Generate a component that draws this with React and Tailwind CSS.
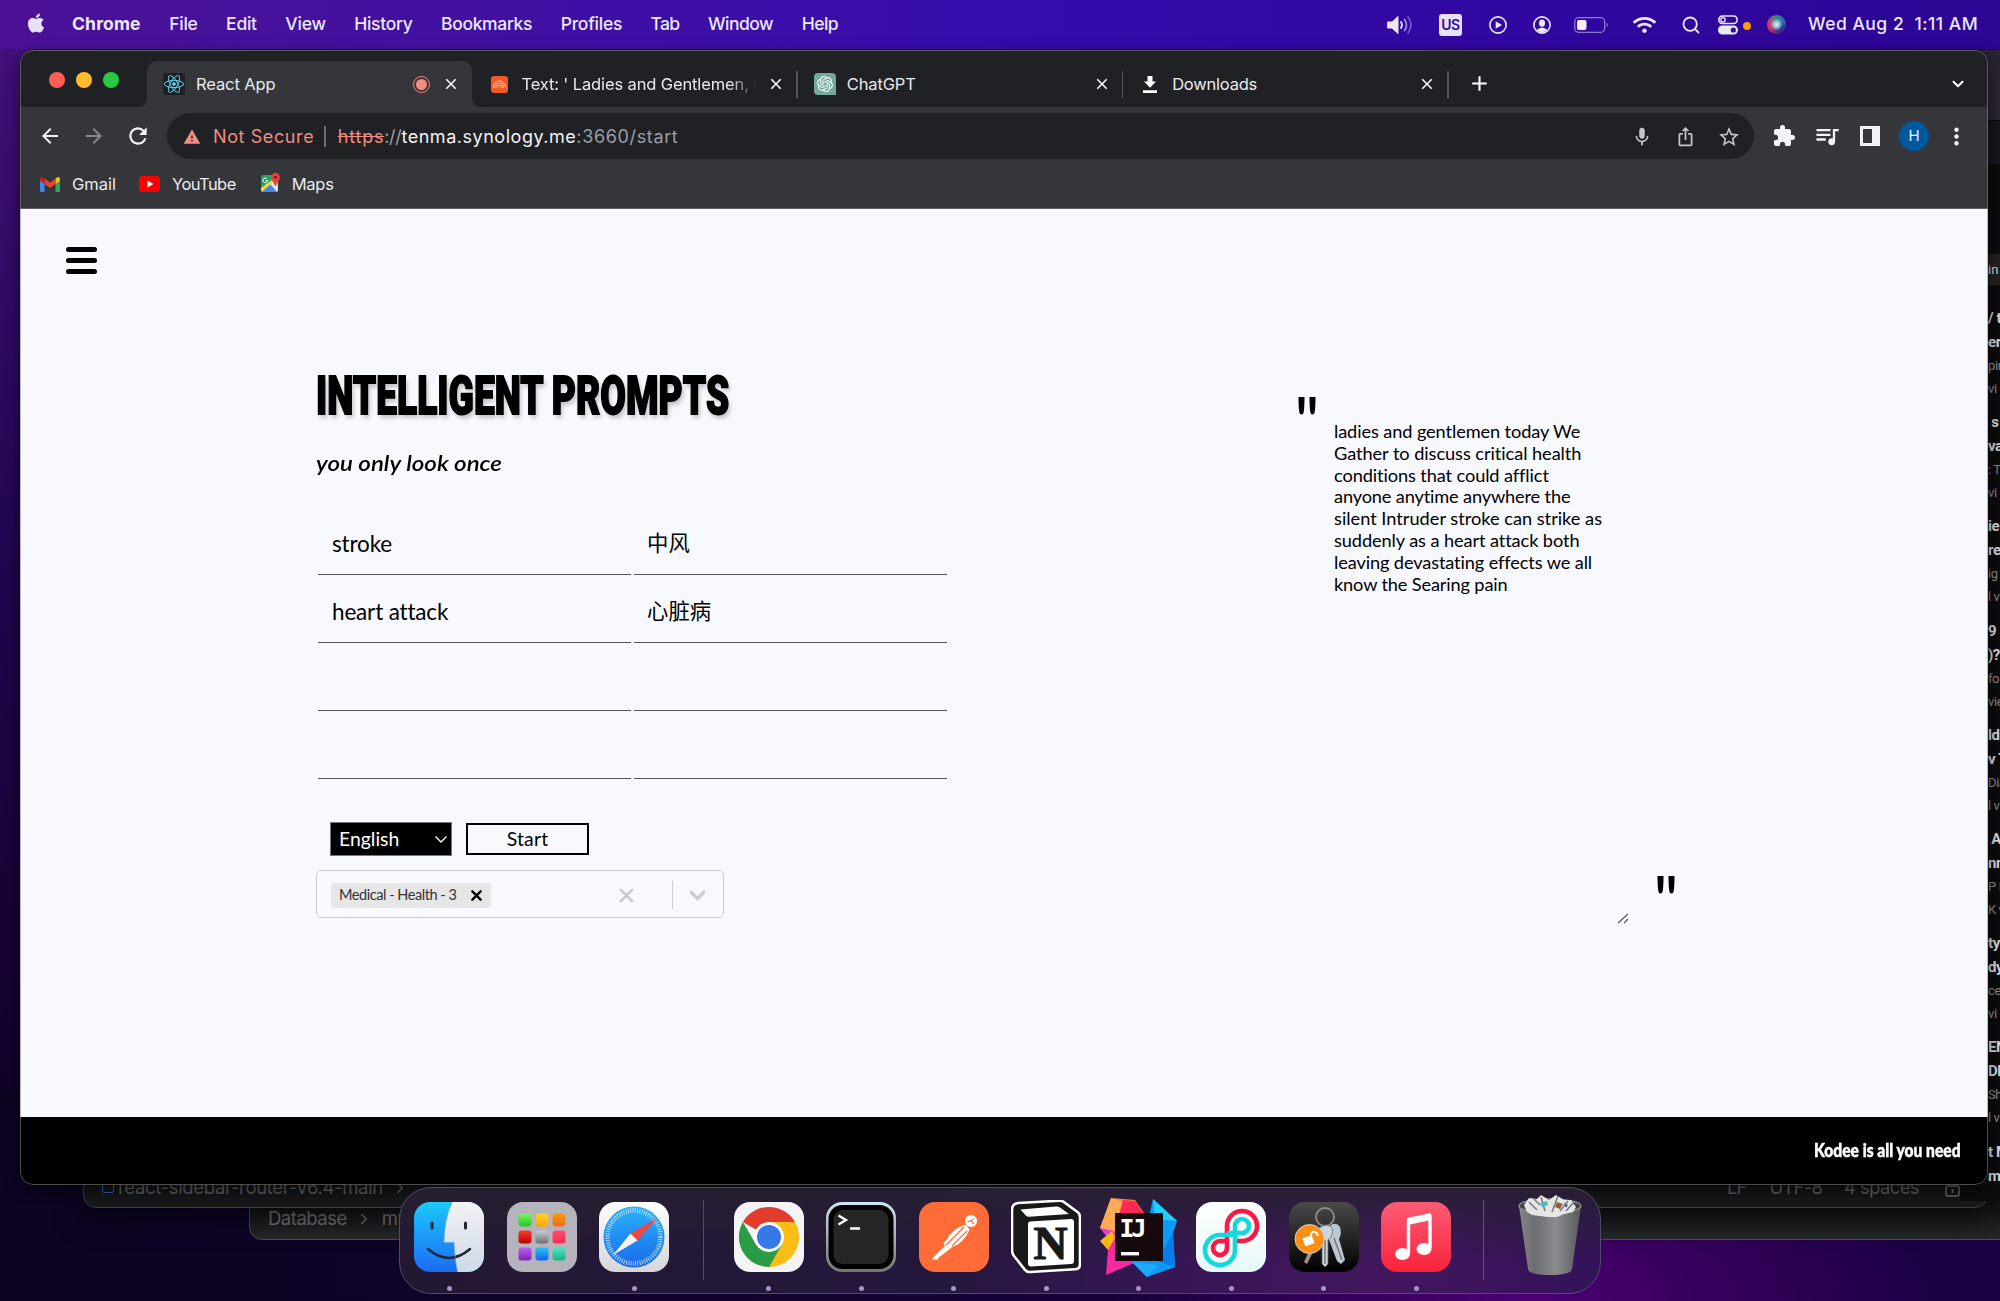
import React, { useLayoutEffect, useRef, useState } from "react";
import { FaApple, FaReact, FaWifi } from "react-icons/fa";
import { SiOpenai } from "react-icons/si";
import {
  MdArrowBack, MdArrowForward, MdRefresh, MdMic, MdIosShare, MdStarBorder, MdExtension,
  MdQueueMusic, MdMoreVert, MdWarning, MdClose, MdAdd,
} from "react-icons/md";
import { ChevronDown, ChevronRight, Search } from "lucide-react";

/* Text set to a measured width, by tracking or by horizontal stretch. */
function Fit({ w, stretch, className = "", children }) {
  const ref = useRef(null);
  const [style, setStyle] = useState({});
  useLayoutEffect(() => {
    const natural = ref.current.offsetWidth;
    const n = ref.current.textContent.length;
    setStyle(
      stretch
        ? { transform: `scaleX(${w / natural})`, marginRight: w - natural }
        : { letterSpacing: `${(w - natural) / n}px` }
    );
  }, []);
  return (
    <span ref={ref} style={style} className={`inline-block shrink-0 origin-left whitespace-pre ${className}`}>
      {children}
    </span>
  );
}

const MENUS = [["File", 28], ["Edit", 31], ["View", 40], ["History", 58], ["Bookmarks", 91], ["Profiles", 61], ["Tab", 29], ["Window", 65], ["Help", 37]];

function MenuBar() {
  return (
    <header className="absolute inset-x-0 top-0 flex h-[49px] items-center bg-linear-to-r from-[#4b1197] via-[#350bad] to-[#2c0594] pl-[27px] text-[17.5px] text-[#ece8f8]">
      <FaApple className="-mt-1 h-[22px] w-[18px] text-[#e6e2f4]" />
      <nav className="ml-[27px] flex gap-[28.5px]">
        <Fit w={69} className="font-bold">Chrome</Fit>
        {MENUS.map(([t, w]) => <Fit key={t} w={w} className="font-medium">{t}</Fit>)}
      </nav>
      <div className="ml-auto flex w-[613px] items-center">
        <svg width="26" height="22" viewBox="0 0 26 22" fill="none" strokeWidth="1.7" strokeLinecap="round">
          <path d="M1 8h4l6-5.5v17L5 14H1z" fill="#ece8f8" stroke="#ece8f8" strokeWidth="1" strokeLinejoin="round" />
          <path d="M14 8q2 3 0 6" stroke="#ece8f8" />
          <path d="M17.5 5.5q4 5.500 0 11" stroke="#a08fdc" />
          <path d="M21 3q6 8 0 16" stroke="#7158c8" />
        </svg>
        <span className="ml-[26px] flex h-[22px] w-[23px] items-center justify-center rounded-[3px] bg-[#e6e2f4] text-[14px] font-semibold tracking-[-0.5px] text-[#2f0ba2]">US</span>
        <svg className="ml-[27px]" width="18" height="18" viewBox="0 0 18 18">
          <circle cx="9" cy="9" r="8.100" fill="none" stroke="#ece8f8" strokeWidth="1.600" />
          <path d="M6.700 5.200v7.600L13 9z" fill="#ece8f8" />
        </svg>
        <svg className="ml-[25.5px]" width="18" height="18" viewBox="0 0 18 18">
          <circle cx="9" cy="9" r="8.100" fill="none" stroke="#ece8f8" strokeWidth="1.600" />
          <ellipse cx="9" cy="7.200" rx="3" ry="3.600" fill="#ece8f8" />
          <path d="M3.500 14q5.500-5 11 0q-5.500 4.500-11 0z" fill="#ece8f8" />
        </svg>
        <svg className="ml-[23.5px]" width="35" height="16" viewBox="0 0 35 16">
          <rect x=".7" y=".7" width="30" height="14.600" rx="4" fill="none" stroke="#8d79d4" strokeWidth="1.300" />
          <rect x="3" y="3" width="9.500" height="10" rx="2" fill="#f4f1fc" />
          <path d="M32.500 5.500q2.500 2.500 0 5z" fill="#8d79d4" />
        </svg>
        <FaWifi className="ml-[24px] h-[20px] w-[23px]" />
        <Search className="ml-[25px]" size={20} strokeWidth={2.200} />
        <svg className="ml-[17px]" width="20" height="20" viewBox="0 0 20 20">
          <rect x=".8" y="1" width="18.400" height="7.500" rx="3.750" fill="none" stroke="#ece8f8" strokeWidth="1.600" />
          <circle cx="5" cy="4.750" r="2.200" fill="none" stroke="#ece8f8" strokeWidth="1.300" />
          <rect y="10.500" width="20" height="9" rx="4.500" fill="#ece8f8" />
          <circle cx="15.300" cy="15" r="2.600" fill="#2f0ba2" />
        </svg>
        <span className="mt-0.5 ml-[5px] h-2 w-2 rounded-full bg-[#ff9b00]" />
        <span className="ml-[16px] h-[19px] w-[19px] rounded-full bg-[radial-gradient(circle_at_50%_50%,#e8f6ff_0%,#8fb6d8_25%,transparent_45%),conic-gradient(#2b8f86,#2f6fae,#27328f,#5a2d86,#d0355f,#b54a6a,#2b8f86)]" />
        <Fit w={170} className="ml-[22px] font-medium">Wed Aug 2  1:11 AM</Fit>
      </div>
    </header>
  );
}

function Tab({ icon, title, w, active, recording, fade }) {
  return (
    <div className={`relative flex h-[46px] w-[325.4px] items-center ${active ? "rounded-t-[10px] bg-[#35363a]" : ""}`}>
      <span className="ml-4 flex w-[22px] justify-center">{icon}</span>
      <span className={`ml-[11px] w-[236px] overflow-hidden ${fade ? "mask-r-from-88% mask-r-to-100%" : ""}`}>
        <Fit w={w} className="align-middle text-[16.5px] text-[#e9eaed]">{title}</Fit>
      </span>
      {recording && (
        <span className="absolute left-[266px] flex h-[17px] w-[17px] items-center justify-center rounded-full border-[1.5px] border-[#f28b82]">
          <span className="h-[11px] w-[11px] rounded-full bg-[#f28b82]" />
        </span>
      )}
      <MdClose className="ml-[10px]" size={18} />
      {active && (
        <>
          <svg className="absolute bottom-0 -left-[10px]" width="10" height="10"><path d="M10 0v10H0Q10 10 10 0" fill="#35363a" /></svg>
          <svg className="absolute -right-[10px] bottom-0" width="10" height="10"><path d="M0 0v10h10Q0 10 0 0" fill="#35363a" /></svg>
        </>
      )}
      {!active && <span className="absolute right-0 h-[27px] w-[1.5px] bg-[#54575b]" />}
    </div>
  );
}

function TabStrip() {
  return (
    <div className="flex h-[57px] items-end">
      <div className="flex w-[127px] gap-[11px] self-start pt-[22px] pl-[29px]">
        <i className="h-4 w-4 rounded-full bg-[#ff5f57]" />
        <i className="h-4 w-4 rounded-full bg-[#febc2e]" />
        <i className="h-4 w-4 rounded-full bg-[#28c840]" />
      </div>
      <Tab active recording title="React App" w={79} icon={<span className="rounded-[3px] bg-[#1f2023] p-px"><FaReact size={20} color="#61dafb" /></span>} />
      <Tab fade title="Text: ' Ladies and Gentlemen, to" w={247} icon={
        <svg width="17" height="17" viewBox="0 0 17 17" fill="none" stroke="#fbd0b5" strokeWidth="1">
          <rect width="17" height="17" rx="3" fill="#f15a24" stroke="none" />
          <path d="M2.500 12V11a6 6 0 0 1 12 0v1M4.600 12v-1a3.900 3.900 0 0 1 7.800 0v1M6.600 12v-1a1.900 1.900 0 0 1 3.800 0v1" />
        </svg>} />
      <Tab title="ChatGPT" w={69} icon={<span className="rounded-[4px] rounded-br-none bg-[#74aa9c] p-[3px]"><SiOpenai size={16} color="#fff" /></span>} />
      <Tab title="Downloads" w={85} icon={
        <svg width="14" height="17" viewBox="0 0 14 17" fill="#fff"><path d="M4.500 0h5v5.500H13L7 11.800 1 5.500h3.500zM0 14.300h14V17H0z" /></svg>} />
      <MdAdd className="mb-[11px] ml-[18px]" size={25} />
      <ChevronDown className="mr-[21px] mb-[14px] ml-auto" size={18} strokeWidth={2.800} />
    </div>
  );
}

function Toolbar() {
  return (
    <div className="flex h-[52px] items-center bg-[#35363a] pt-[6px] text-[#f1f3f4]">
      <MdArrowBack className="ml-[18px]" size={24} />
      <MdArrowForward className="ml-[20px] text-[#88898c]" size={24} />
      <MdRefresh className="ml-[19px]" size={26} />
      <div className="ml-[16px] flex h-[46px] w-[1587px] items-center rounded-full bg-[#202124] pt-px pl-4 text-[18px] text-[#9aa0a6]">
        <MdWarning size={18} color="#f28b82" />
        <Fit w={101} className="ml-[12px] text-[#f28b82]">Not Secure</Fit>
        <span className="mr-[12px] ml-[10px] h-[21px] w-[1.5px] bg-[#6d6f73]" />
        <Fit w={47} className="text-[#f28b82] line-through">https</Fit>
        <Fit w={17}>://</Fit>
        <Fit w={175} className="text-[#f3f4f6]">tenma.synology.me</Fit>
        <Fit w={102}>:3660/start</Fit>
        <MdMic className="ml-auto text-[#c4c7c9]" size={22} />
        <MdIosShare className="ml-[22px] text-[#c4c7c9]" size={21} />
        <MdStarBorder className="mr-[13px] ml-[21px] text-[#c4c7c9]" size={24} />
      </div>
      <MdExtension className="ml-[18px]" size={24} />
      <MdQueueMusic className="ml-[17px]" size={28} />
      <svg className="ml-[19px]" width="20" height="20"><path fillRule="evenodd" d="M0 0h20v20H0zM3 3v14h9V3z" fill="#f1f3f4" /></svg>
      <span className="ml-[19px] flex h-[30px] w-[30px] items-center justify-center rounded-full bg-[#00599f] text-[15px]">H</span>
      <MdMoreVert className="ml-[14px]" size={27} />
    </div>
  );
}

function Bookmarks() {
  return (
    <div className="flex h-[50px] items-center border-b border-[#5f6063] bg-[#35363a] pt-px pl-5 text-[16.5px] text-[#e9eaed]">
      <svg width="20" height="15" viewBox="0 0 20 15">
        <path d="M0 2v11.500Q0 15 1.500 15h3V6z" fill="#4285f4" />
        <path d="M15.500 6v9h3q1.500 0 1.500-1.500V2z" fill="#34a853" />
        <path d="M15.500 1.500V7L20 3.500V2q-.5-3-3-1.600z" fill="#fbbc04" />
        <path d="M4.500 7V1.500L10 5.700l5.500-4.200V7L10 11z" fill="#ea4335" />
        <path d="M0 2v1.500L4.500 7V1.500L3 .4Q.5-1 0 2z" fill="#c5221f" />
      </svg>
      <Fit w={44} className="ml-[12px]">Gmail</Fit>
      <svg className="ml-[23px]" width="21" height="16"><rect width="21" height="16" rx="4" fill="#f00" /><path d="M8.500 4.500v7l6-3.500z" fill="#fff" /></svg>
      <Fit w={64} className="ml-[12px]">YouTube</Fit>
      <svg className="-mt-1 ml-[25px]" width="20" height="21" viewBox="0 0 20 21">
        <rect y="3" width="17" height="17" rx="2" fill="#1fa463" />
        <path d="M1 20L17 5v13q0 2-2 2z" fill="#dfe3e8" />
        <path d="M1.500 20L9 12l7 8z" fill="#4285f4" />
        <path d="M0 16v2q0 1 1 1.500L17 6V3.500z" fill="#fdd835" />
        <path d="M14.500 1a4.500 4.500 0 0 1 4.500 4.500q0 2-2.500 5l-2 4-2-4q-2.500-3-2.500-5A4.500 4.500 0 0 1 14.500 1z" fill="#e94435" />
        <circle cx="14.500" cy="5.300" r="1.600" fill="#8c1d14" />
        <path d="M6 6.800a2.300 2.300 0 1 0 .6 1.900H4.800" fill="none" stroke="#fff" />
      </svg>
      <Fit w={42} className="ml-[11px]">Maps</Fit>
    </div>
  );
}

const ROWS = [["stroke", 60, "中风"], ["heart attack", 115, "心脏病"], ["", 0, ""], ["", 0, ""]];

function Cross({ size, weight, className }) {
  return (
    <svg className={`shrink-0 ${className}`} width={size} height={size} viewBox="0 0 12 12" fill="none" stroke="currentColor" strokeWidth={weight} strokeLinecap="round">
      <path d="M1.500 1.500l9 9M10.500 1.500l-9 9" />
    </svg>
  );
}

function PromptForm() {
  return (
    <section className="ml-[296px] w-[640px]">
      <h1 className="h-[56px] font-[Roboto] text-[53px] leading-[55px] font-black [-webkit-text-stroke:1.8px_#000] [text-shadow:3px_4px_5px_rgba(0,0,0,0.22)]">
        <Fit w={413} stretch>INTELLIGENT PROMPTS</Fit>
      </h1>
      <p className="mt-[22px] h-[60px] font-[Lato] text-[20.5px] leading-[32px] font-semibold italic">
        <Fit w={186} stretch>you only look once</Fit>
      </p>
      <div className="grid w-[631px] grid-cols-2 gap-x-[3px] pl-[2px]">
        {ROWS.map(([en, w, zh], i) => (
          <React.Fragment key={i}>
            <div className="flex h-[68px] items-center border-b border-[#56565a] pt-[6px] pl-[14px] text-[22.5px]">
              {en && <Fit w={w}>{en}</Fit>}
            </div>
            <div className="flex h-[68px] items-center border-b border-[#56565a] pt-[4px] pl-[13px] font-['Noto_Sans_CJK_SC',sans-serif] text-[21.4px]">{zh}</div>
          </React.Fragment>
        ))}
      </div>
      <div className="mt-[43px] flex h-[34px] items-center gap-[14px] pl-[14px] text-[19.4px]">
        <div className="flex h-[34px] w-[122px] items-center justify-between border border-[#767676] bg-black pr-[3px] pl-[8px] text-white">
          <Fit w={60}>English</Fit>
          <svg width="14" height="9" viewBox="0 0 14 9" fill="none" stroke="#fff" strokeWidth="1.400"><path d="M1.500 1.500L7 7l5.500-5.500" /></svg>
        </div>
        <div className="flex h-[32px] w-[123px] items-center justify-center border-2 border-black">
          <Fit w={42}>Start</Fit>
        </div>
      </div>
      <div className="mt-[14px] flex h-[48px] w-[408px] items-center rounded-[5px] border-[1.5px] border-[#ccc] pt-[2px] pl-[14px]">
        <div className="flex h-[25px] w-[160px] items-center rounded-[3px] bg-[#e6e6e6] pl-[8px] text-[14.5px] text-[#333]">
          <Fit w={118}>Medical - Health - 3</Fit>
          <Cross size={11} weight={2.600} className="ml-[14px] text-black" />
        </div>
        <Cross size={15} weight={2.200} className="ml-[128px] text-[#ccc]" />
        <span className="ml-[38px] h-[28px] w-[1.4px] bg-[#ccc]" />
        <ChevronDown className="ml-[12px] text-[#ccc]" size={25} strokeWidth={3.200} />
      </div>
    </section>
  );
}

const LINES = [
  ["ladies and gentlemen today We", 246], ["Gather to discuss critical health", 248], ["conditions that could afflict", 215],
  ["anyone anytime anywhere the", 237], ["silent Intruder stroke can strike as", 268], ["suddenly as a heart attack both", 245],
  ["leaving devastating effects we all", 258], ["know the Searing pain", 174],
];

function QuoteMark({ className }) {
  return (
    <svg className={className} width="18" height="18" viewBox="0 0 18 18">
      <path d="M.5 0h6q0 11-1 16-2 3-4 0-1-5-1-16zM11.500 0h6q0 11-1 16-2 3-4 0-1-5-1-16z" />
    </svg>
  );
}

function Transcript() {
  return (
    <section className="ml-[342px] flex h-[560px] items-start">
      <QuoteMark className="mt-[28px]" />
      <div className="mt-[52px] ml-[18px] flex h-[503px] w-[296px] flex-col items-start text-[18.2px] leading-[21.82px]">
        {LINES.map(([t, w]) => <Fit key={t} w={w}>{t}</Fit>)}
        <svg className="mt-auto mr-[1px] self-end" width="12" height="11" stroke="#555" strokeWidth="1.200"><path d="M1 10L11 1M7 10l4-4" /></svg>
      </div>
      <QuoteMark className="mt-[507px] ml-[27px]" />
    </section>
  );
}

function ChromeWindow() {
  return (
    <div className="absolute top-[50px] left-[20px] flex h-[1135px] w-[1968px] flex-col overflow-hidden rounded-[13px] bg-[#202124] text-white">
      <TabStrip />
      <Toolbar />
      <Bookmarks />
      <main className="flex-1 bg-[#f8f8ff] font-[Lato] text-black">
        <div className="h-[160px] pt-[38px] pl-[46px]">
          <div className="flex w-[31px] flex-col gap-[5.8px]">
            <i className="h-[5.2px] rounded-sm bg-black" />
            <i className="h-[5.2px] rounded-sm bg-black" />
            <i className="h-[5.2px] rounded-sm bg-black" />
          </div>
        </div>
        <div className="flex">
          <PromptForm />
          <Transcript />
        </div>
      </main>
      <footer className="flex h-[68px] items-center justify-end bg-black pr-[27px] pb-0.5 font-[Lato] text-[19px] font-black [-webkit-text-stroke:0.5px_#fff]">
        <Fit w={147} stretch>Kodee is all you need</Fit>
      </footer>
      <div className="pointer-events-none absolute inset-0 rounded-[13px] border border-[#8a8a8a]/55" />
    </div>
  );
}

const SIDE = [
  ["/ t", "er", "pin", "vi"], [" s", "va", ": T", "vi"], ["ie", "re", "ig", "l v"], ["9", ")?'", "for", "vie"], ["ld", "v T", "Dia", "l v"],
  [" A", "nn", "P M", "K v"], ["ty", "dy", "ceC", "vi"], ["EN", "DP", "Sh", "l v"], ["t M", "mp", "", ""],
];

function SideWindow() {
  return (
    <div className="absolute top-[50px] left-[1960px] h-[1151px] w-[40px] overflow-hidden bg-[#0c0c0c] pl-[28px] font-[Roboto] text-[#d8d8d8]">
      <div className="-ml-7 h-[71px] border-b border-[#0a080c] bg-[#2a2433]" />
      <div className="-ml-7 h-[43px] bg-[#19151f]" />
      <div className="mt-[90px] flex h-[31px] items-center bg-[#222] text-[13px]">in</div>
      <div className="mt-[21px]">
        {SIDE.map((g, i) => (
          <div key={i} className="h-[104.2px] tracking-tight whitespace-pre">
            <p className="h-[24px] text-[15px] leading-[24px] font-bold">{g[0]}</p>
            <p className="h-[24px] text-[15px] leading-[24px] font-bold">{g[1]}</p>
            <p className="h-[23px] text-[13px] leading-[23px] text-[#8a8a8a]">{g[2]}</p>
            <p className="h-[23px] text-[13px] leading-[23px] text-[#8a8a8a]">{g[3]}</p>
          </div>
        ))}
      </div>
    </div>
  );
}

function BackWindows() {
  return (
    <>
      <div className="absolute top-[1150px] left-[249px] flex h-[90px] w-[1770px] items-end rounded-[13px] border border-[#4a4b4d] bg-linear-to-b from-[#101112] from-60% to-[#27282a] pb-[6px] pl-[18px] text-[18.5px] text-[#707174]">
        <Fit w={79}>Database</Fit>
        <ChevronRight className="mr-[9px] mb-[5px] ml-[8px]" size={18} />
        <span>my</span>
      </div>
      <div className="absolute top-[1150px] left-[83px] flex h-[58px] w-[1905px] items-end rounded-[13px] border border-[#3c3d3f] bg-linear-to-b from-[#0c0d0e] from-50% to-[#191a1b] pb-[5px] pl-[18px] text-[18.5px] text-[#55565a] shadow-[0_8px_30px_rgba(0,0,0,0.6)]">
        <span className="mb-[9px] h-[12px] w-[12px] rounded-[2px] border-[1.5px] border-[#2b57a8]" />
        <Fit w={265} className="ml-[4px]">react-sidebar-router-v6.4-main</Fit>
        <ChevronRight className="mb-[5px] ml-[8px]" size={18} />
        <span className="ml-auto flex pr-[27px]">
          <Fit w={19}>LF</Fit>
          <Fit w={53} className="ml-[23px]">UTF-8</Fit>
          <Fit w={75} className="ml-[22px]">4 spaces</Fit>
          <svg className="mt-[6px] ml-[26px]" width="15" height="18" fill="none" stroke="#606164" strokeWidth="1.500"><rect x="1" y="6" width="13" height="10" rx="2" /><path d="M7.500 9v4M10 6V3q2-3 5 0" /></svg>
        </span>
      </div>
    </>
  );
}

function Squircle({ fill, children }) {
  return (
    <svg width="70" height="70" viewBox="0 0 70 70" className="overflow-visible">
      <rect width="70" height="70" rx="16" fill={fill} />
      {children}
    </svg>
  );
}

const Grad = ({ id, a, b }) => (
  <linearGradient id={id} x1="0" y1="0" x2="0" y2="1"><stop stopColor={a} /><stop offset="1" stopColor={b} /></linearGradient>
);

const Finder = () => (
  <Squircle fill="url(#finder)">
    <Grad id="finder" a="#1cc8fb" b="#1d6bf3" />
    <Grad id="finderR" a="#f2f2f4" b="#cfd9e8" />
    <path d="M38 0h16a16 16 0 0 1 16 16v38a16 16 0 0 1-16 16H43.500Q40.500 57 40 40.500H30Q30 18 38 0z" fill="url(#finderR)" />
    <path d="M18 21v5M51.500 21v5" stroke="#1d2938" strokeWidth="3" strokeLinecap="round" />
    <path d="M14 47q21 18 42 0" stroke="#1d2938" strokeWidth="2.500" fill="none" strokeLinecap="round" />
    <path d="M38 0Q30 18 30 40.500H40Q40.500 57 43.500 70" fill="none" stroke="#5b9fd0" strokeWidth=".6" />
  </Squircle>
);

const PADS = [["#7df36b", "#1fc91f"], ["#fdd22b", "#f9a806"], ["#fb9a0b", "#ef6c1f"], ["#fb3a2e", "#b90000"], ["#c9ced2", "#6d7174"], ["#ff4a78", "#f92d4d"], ["#bf5df0", "#7a25b8"], ["#29c3fb", "#1561e8"], ["#56e0c8", "#18b381"]];

const Launchpad = () => (
  <Squircle fill="#b5b3bb">
    {PADS.map(([a, b], i) => (
      <g key={i}>
        <Grad id={`pad${i}`} a={a} b={b} />
        <rect x={11.500 + (i % 3) * 17} y={11.500 + Math.floor(i / 3) * 17} width="13" height="13" rx="3.200" fill={`url(#pad${i})`} />
      </g>
    ))}
  </Squircle>
);

const Safari = () => (
  <Squircle fill="url(#saf)">
    <Grad id="saf" a="#ffffff" b="#d6d6d8" />
    <Grad id="safB" a="#28b4f8" b="#1b68ec" />
    <circle cx="35" cy="35" r="30.500" fill="url(#safB)" />
    <circle cx="35" cy="35" r="26.500" fill="none" stroke="#d8ecff" strokeWidth="4.500" strokeDasharray=".8 1.513" />
    <path d="M58 16L38.500 38.500 31.500 31.500z" fill="#f4443e" />
    <path d="M14 53L31.500 31.500 38.500 38.500z" fill="#f4f4f6" />
  </Squircle>
);

const ChromeIcon = () => (
  <Squircle fill="#f4f4f4">
    <path d="M35 35L8.900 20A30 30 0 0 1 61 20z" fill="#e33b2e" />
    <path d="M35 35V20h26A30 30 0 0 1 35 65z" fill="#fbbc16" />
    <path d="M35 35L48 42.500 35 65A30 30 0 0 1 8.900 20L22 42.500z" fill="#2b9b46" />
    <circle cx="35" cy="35" r="15" fill="#fff" />
    <circle cx="35" cy="35" r="12" fill="#3478ea" />
  </Squircle>
);

const Terminal = () => (
  <Squircle fill="url(#term)">
    <Grad id="term" a="#cde8f2" b="#77736f" />
    <rect x="2.500" y="3" width="65" height="64" rx="14" fill="#000" />
    <rect x="7.500" y="8" width="55" height="54" rx="9" fill="#262626" />
    <path d="M12.500 13.500l7.500 4.500-7.500 4.500M24 26.500h10" fill="none" stroke="#fff" strokeWidth="2.300" />
  </Squircle>
);

const Postman = () => (
  <Squircle fill="#ff6c37">
    <circle cx="52" cy="19" r="6" fill="#fff" />
    <path d="M46 23q3 1 4.500 5Q44 42 33 45l-6 5-8 6q0 1 1 1.500h-7l1.500-2.500L26 44l-1.500-3 3-3Q34 26 46 23z" fill="#fff" />
    <path d="M45 25L27 43M48 29L33 44M48.500 20l6-3M52 19l3 3" stroke="#ff6c37" strokeWidth="1.200" />
  </Squircle>
);

const Notion = () => (
  <svg width="70" height="74" viewBox="0 0 70 74">
    <path d="M7 3L48 .8Q51 .6 53.500 2.500L66.500 12Q69 14 69 17v47q0 5-5 5.300L19 72q-3 .2-5-2.200L3 56Q1 53 1 50V10Q1 4 7 3z" fill="#191919" stroke="#fff" strokeWidth="2.600" />
    <path d="M9.500 9.500L45 6.500q2-.2 4 1l9 6.500-40 2.700q-2 0-3.500-1.500z" fill="#fff" />
    <path d="M19 21.500l41-2.500q3 0 3 3v39q0 2.800-3 3L20 66.500q-3 0-3-3V24q0-2.500 2-2.500z" fill="#fff" />
    <text x="22.500" y="59" fontFamily="Liberation Serif" fontWeight="700" fontSize="47" textLength="34" lengthAdjust="spacingAndGlyphs" fill="#191919" stroke="#191919" strokeWidth="1.200">N</text>
  </svg>
);

const IntelliJ = () => (
  <svg width="80" height="80" viewBox="0 0 80 80">
    <path d="M12 1l24 2 9 13-30 25L1 31z" fill="#fd8a3c" />
    <path d="M12 1L1 31l14 6 15-30z" fill="#fdb35c" opacity=".8" />
    <path d="M24 3l12 1 10 14-30 15z" fill="#fe2857" />
    <path d="M1 31l18 4-6 12z" fill="#e23bd8" />
    <path d="M1 44l12-10 10 20-14-1z" fill="#fdb60d" />
    <path d="M9 53l8-14 18 27L7 78z" fill="#f72ba0" />
    <path d="M54 2l24 22-4 12 2 34-28 10-15-15L50 20z" fill="#0a9bf9" />
    <path d="M54 2l24 22-22-2z" fill="#1ed0fa" />
    <path d="M74 36l2 34-18-6z" fill="#067de8" />
    <path d="M33 65l26 3-11 12z" fill="#22a8fd" />
    <rect x="16" y="16" width="48" height="48" fill="#170a0e" />
    <text x="20.500" y="40" fontFamily="DejaVu Sans Mono" fontWeight="700" fontSize="25" textLength="27" fill="#fff">IJ</text>
    <rect x="22" y="55" width="18" height="3.400" fill="#fff" />
  </svg>
);

const Loops = () => (
  <Squircle fill="url(#loops)">
    <Grad id="loops" a="#ffffff" b="#e6f9f7" />
    <g fill="none" strokeWidth="4.600">
      <path d="M31 39V24a15 15 0 1 1 15 15H37" stroke="#ff1744" />
      <path d="M39 31v17a15 15 0 1 1-15-15h15" stroke="#14d8dc" />
      <path d="M31 39v7a7 7 0 1 1-7-7h8" stroke="#ff1744" />
      <path d="M39 33v-9a7 7 0 1 1 7 7H31" stroke="#14d8dc" />
    </g>
  </Squircle>
);

const Keychain = () => (
  <Squircle fill="url(#keys)">
    <Grad id="keys" a="#4a4a4a" b="#000000" />
    <circle cx="36" cy="15" r="9" fill="none" stroke="#8f8a80" strokeWidth="2" />
    <path d="M41 24q6-5 10 1 2 7-1 12l6 21-4 4-4-3-9-24q-2-7 2-11z" fill="#b9c8d2" />
    <path d="M30 26q8-6 13 0 2 7-4 12v24l-3 3-3-3V39q-4-6-3-13z" fill="#c9d6df" stroke="#5d666c" strokeWidth=".8" />
    <path d="M36 38v24M45 36l8 22" stroke="#7e7869" strokeWidth="1.500" />
    <path d="M20 49l-5 11 3 2 6-12z" fill="#9a958c" />
    <circle cx="20.500" cy="37" r="14.500" fill="#ff8f14" stroke="#c9cdd0" strokeWidth="1" />
    <path d="M13.500 36.500l9-3.500 3 8-9 3.500z" fill="#fff" />
    <path d="M22 34q0-5 4-4 3 1 2.500 4" fill="none" stroke="#fff" strokeWidth="2" />
  </Squircle>
);

const Music = () => (
  <Squircle fill="url(#music)">
    <Grad id="music" a="#fb5c74" b="#fa233b" />
    <path d="M26 16L50 11v7L29 22.500V49h-3z" fill="#fff" />
    <path d="M27.500 17v34M49 13v33" stroke="#fff" strokeWidth="3.400" />
    <ellipse cx="21.500" cy="52" rx="7.500" ry="6" fill="#fff" />
    <ellipse cx="43" cy="47" rx="7.500" ry="6" fill="#fff" />
  </Squircle>
);

const Trash = () => (
  <svg width="64" height="82" viewBox="0 0 64 82">
    <defs>
      <linearGradient id="can"><stop stopColor="#85878a" /><stop offset=".25" stopColor="#6b6d70" /><stop offset=".6" stopColor="#8a8c8f" /><stop offset="1" stopColor="#56585b" /></linearGradient>
    </defs>
    <path d="M1 12l9 63q1 6 22 6t22-6l9-63z" fill="url(#can)" />
    <ellipse cx="32" cy="12" rx="31" ry="7" fill="#3e4043" stroke="#8c8e91" strokeWidth="1.500" />
    <path d="M6 11l5-7 8 1 4-4 8 5 7-5 8 5 7 0 5 7-3 5-9 2-7 3-9 0-8-1-8-1-5-3z" fill="#e6e6e4" />
    <path d="M11 8l8 8M23 3l4 14M40 2l-6 16M50 7l-8 10M56 8l-8 9M16 5l6 6" stroke="#77797a" strokeWidth="1.500" />
    <path d="M22 9l7-2 1 4-6 2z" fill="#4db8c9" />
    <path d="M39 8l6 2-3 5-5-2z" fill="#9a5b3c" />
    <path d="M46 9l4 2-2 3z" fill="#3b63a8" />
  </svg>
);

function DockItem({ children, dot = true }) {
  return (
    <div className="relative flex h-[70px] w-[92.5px] items-center justify-center">
      {children}
      {dot && <i className="absolute -bottom-[19px] h-[5px] w-[5px] rounded-full bg-[#a893c4]" />}
    </div>
  );
}

function Dock() {
  return (
    <div className="absolute top-[1187px] left-[399px] flex h-[107px] w-[1202px] items-start rounded-[32px] border border-[#534c66] bg-[linear-gradient(to_bottom,rgba(38,32,48,0.9),transparent_70%),linear-gradient(to_right,#231833_0%,#24173d_45%,#3a1658_68%,#42165f_82%,#33135a_100%)] pt-[14px] pl-[3px]">
      <DockItem><Finder /></DockItem>
      <DockItem dot={false}><Launchpad /></DockItem>
      <DockItem><Safari /></DockItem>
      <i className="-mt-[2px] mr-[19px] ml-[22px] h-[80px] w-px bg-[#554a68]" />
      <DockItem><ChromeIcon /></DockItem>
      <DockItem><Terminal /></DockItem>
      <DockItem><Postman /></DockItem>
      <DockItem><Notion /></DockItem>
      <DockItem><IntelliJ /></DockItem>
      <DockItem><Loops /></DockItem>
      <DockItem><Keychain /></DockItem>
      <DockItem><Music /></DockItem>
      <i className="-mt-[2px] mr-[20px] ml-[20px] h-[80px] w-px bg-[#6a4d84]" />
      <DockItem dot={false}><div className="-mt-1"><Trash /></div></DockItem>
    </div>
  );
}

export default function App() {
  return (
    <div className="relative h-[1301px] w-[2000px] overflow-hidden bg-[radial-gradient(ellipse_420px_200px_at_1530px_1301px,#4c0073,transparent),linear-gradient(to_right,#0d0322_0%,#10032a_30%,#17013a_60%,#1a0043_100%)] font-[Inter]">
      <div className="absolute top-[49px] left-0 h-[1040px] w-[34px] bg-linear-to-b from-[#42107a] via-[#210550] to-[#12022a]" />
      <MenuBar />
      <BackWindows />
      <SideWindow />
      <div className="absolute top-[52px] left-[20px] h-[1131px] w-[1968px] rounded-[13px] shadow-[0_4px_16px_rgba(0,0,0,0.6)]" />
      <ChromeWindow />
      <Dock />
    </div>
  );
}
